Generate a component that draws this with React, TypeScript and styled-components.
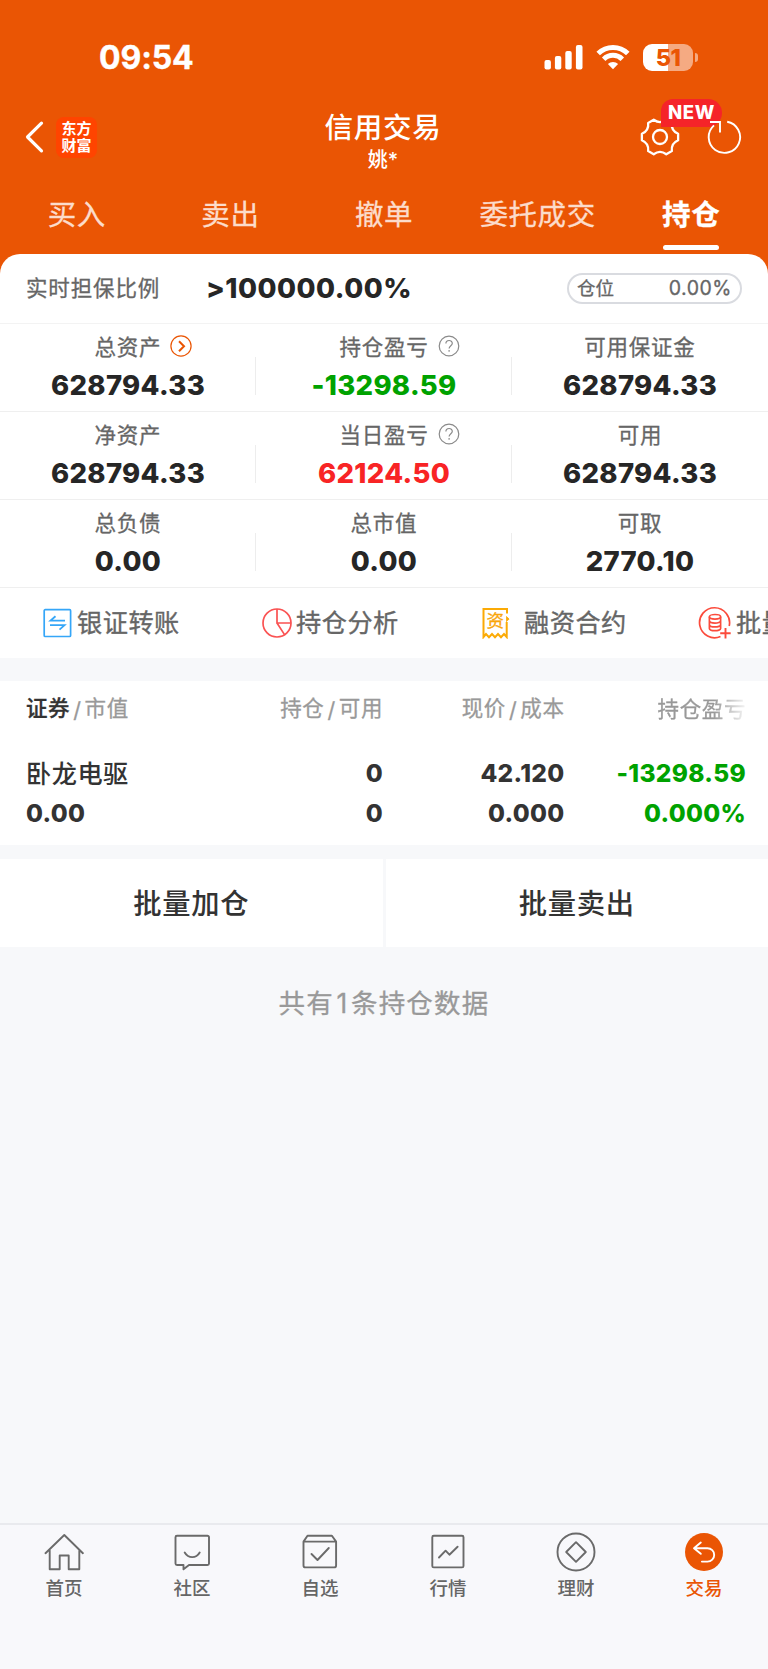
import React from 'react';
import styled, { createGlobalStyle } from 'styled-components';

const ORANGE = '#ea5504';
const GREEN = '#00a200';
const RED = '#f82425';
const INK = '#262626';
const PAGE = '#f7f8fa';

const GlobalStyle = createGlobalStyle`
  * { box-sizing: border-box; }
  body {
    margin: 0;
    background: #fff;
    font-family: Inter, "Noto Sans CJK SC", sans-serif;
    line-height: 1.3;
    color: ${INK};
  }
  svg { display: block; flex: none; }
`;

const Screen = styled.div`
  width: 768px;
  height: 1669px;
  display: flex;
  flex-direction: column;
  overflow: hidden;
  background: ${PAGE};
`;

const Header = styled.header`
  height: 274px;
  flex: none;
  background: ${ORANGE};
  color: #fff;
`;

const StatusBar = styled.div`
  height: 95px;
  padding: 19px 70px 0 99px;
  display: flex;
  align-items: center;
  justify-content: space-between;
`;

const Clock = styled.div`
  padding-top: 1px;
  font-size: 32px;
  line-height: 38px;
  font-weight: 700;
  letter-spacing: -0.1px;
  -webkit-text-stroke: 0.4px;
`;

const StatusIcons = styled.div`
  display: flex;
  align-items: center;
  gap: 13px;
`;

const BatteryWrap = styled.div`
  display: flex;
  align-items: center;
  gap: 2px;
`;

const BatteryBody = styled.div`
  width: 50px;
  height: 27px;
  border-radius: 9px;
  background: linear-gradient(90deg, #fff 50%, #f5aa82 50%);
  color: ${ORANGE};
  font-size: 23.5px;
  font-weight: 800;
  line-height: 27px;
  text-align: center;
  letter-spacing: -0.5px;
`;

const BatteryCap = styled.div`
  width: 3px;
  height: 9px;
  border-radius: 0 4px 4px 0;
  background: #f5aa82;
`;

const NavBar = styled.div`
  height: 84px;
  padding: 0 26px 0 24px;
  display: grid;
  grid-template-columns: 1fr auto 1fr;
  align-items: center;
`;

const NavLeft = styled.div`
  display: flex;
  align-items: center;
  gap: 11px;
`;

const Logo = styled.div`
  width: 41px;
  height: 41px;
  border-radius: 8px;
  background: #ff4400;
  display: flex;
  flex-direction: column;
  align-items: center;
  justify-content: center;
  font-size: 15px;
  line-height: 17.5px;
  font-weight: 700;
`;

const TitleBlock = styled.div`
  padding-top: 9px;
  display: flex;
  flex-direction: column;
  align-items: center;
`;

const Title = styled.div`
  font-size: 28.5px;
  line-height: 36px;
  font-weight: 500;
  letter-spacing: 0.8px;
`;

const Subtitle = styled.div`
  font-size: 20px;
  line-height: 28px;
  font-weight: 500;
`;

const NavRight = styled.div`
  display: flex;
  justify-content: flex-end;
  align-items: center;
  gap: 27px;
`;

const GearHolder = styled.div`
  position: relative;
`;

const NewBadge = styled.div`
  position: absolute;
  left: 21px;
  top: -18px;
  width: 61px;
  height: 28px;
  border-radius: 12px 14px 14px 0;
  background: #f52429;
  font-size: 18.5px;
  line-height: 27px;
  font-weight: 800;
  letter-spacing: 0.6px;
  text-align: center;
`;

const RefreshHolder = styled.div`
  position: relative;
`;

const Tabs = styled.nav`
  display: grid;
  grid-template-columns: repeat(5, 1fr);
`;

const Tab = styled.div<{ $active?: boolean }>`
  height: 75px;
  padding-top: 18px;
  display: flex;
  flex-direction: column;
  align-items: center;
  gap: 12px;
  font-size: 28.5px;
  line-height: 36px;
  letter-spacing: 0.6px;
  font-weight: ${p => (p.$active ? 700 : 400)};
  color: ${p => (p.$active ? '#fff' : '#fcdccb')};
  -webkit-text-stroke: 0.3px;
`;

const TabLine = styled.div`
  width: 56px;
  height: 5px;
  border-radius: 3px;
  background: #fff;
`;

const Panel = styled.section`
  flex: none;
  margin-top: -20px;
  border-radius: 20px 20px 0 0;
  background: #fff;
`;

const RatioRow = styled.div`
  height: 70px;
  padding: 1px 26px 0 26px;
  display: flex;
  align-items: center;
  border-bottom: 1px solid #f3f3f3;
`;

const RatioLabel = styled.div`
  width: 180px;
  font-size: 21.5px;
  letter-spacing: 0.85px;
  color: #666;
  -webkit-text-stroke: 0.3px;
`;

const RatioValue = styled.div`
  flex: 1;
  font-size: 27.5px;
  font-weight: 800;
  letter-spacing: 0.5px;
`;

const PositionPill = styled.div`
  width: 175px;
  height: 31px;
  margin-top: -1px;
  padding: 0 8px;
  border: 2px solid #d9dbe0;
  border-radius: 16px;
  display: flex;
  align-items: center;
  justify-content: space-between;
  font-size: 18.5px;
  line-height: 27px;
  color: #666;
  -webkit-text-stroke: 0.3px;
`;

const PillValue = styled.span`
  font-size: 19.5px;
  letter-spacing: 0.5px;
`;

const AssetGrid = styled.div`
  display: grid;
  grid-template-columns: repeat(3, 256px);
`;

const AssetCell = styled.div`
  height: 88px;
  padding-top: 8px;
  border-bottom: 1px solid #efefef;
  display: flex;
  flex-direction: column;
  align-items: center;
  background: linear-gradient(#ededed, #ededed) no-repeat right 0 top 33px / 1px 38px;
  &:nth-child(3n) { background: none; }
`;

const AssetLabel = styled.div`
  display: flex;
  align-items: center;
  height: 30px;
  font-size: 21.5px;
  line-height: 30px;
  letter-spacing: 0.75px;
  color: #666;
  -webkit-text-stroke: 0.3px;
`;

const LabelIcon = styled.span`
  margin: -2px -31px 0 9px;
`;

const AssetValue = styled.div<{ $color?: string }>`
  height: 46px;
  line-height: 46px;
  font-size: 27.5px;
  font-weight: 800;
  letter-spacing: 0.3px;
  color: ${p => p.$color ?? INK};
`;

const QuickRow = styled.div`
  height: 70px;
  padding-left: 41px;
  display: flex;
  overflow: hidden;
`;

const QuickItem = styled.div<{ $gap: number }>`
  flex: 0 0 219px;
  display: flex;
  align-items: center;
  gap: ${p => p.$gap}px;
  white-space: nowrap;
  font-size: 25.2px;
  letter-spacing: 0.5px;
  color: #666;
  -webkit-text-stroke: 0.35px;
  svg { -webkit-text-stroke: 0; }
`;

const Holdings = styled.section`
  flex: none;
  height: 164px;
  margin-top: 23px;
  padding: 0 21.5px 0 26px;
  background: #fff;
`;

const HoldingRow = styled.div`
  height: 40px;
  display: grid;
  grid-template-columns: 176px 181px 181.5px 181.5px;
  align-items: center;
  text-align: right;
  font-size: 24.5px;
  font-weight: 800;
  letter-spacing: 0.3px;
  color: #333;
`;

const HoldingHead = styled(HoldingRow)`
  height: 57px;
  margin-bottom: 16px;
`;

const HeadCell = styled.div<{ $left?: boolean; $fade?: boolean }>`
  display: flex;
  gap: 3px;
  justify-content: ${p => (p.$left ? 'flex-start' : 'flex-end')};
  font-size: 21.5px;
  letter-spacing: 0.6px;
  font-weight: 400;
  color: #999;
  -webkit-text-stroke: 0.3px;
  ${p => p.$fade && 'mask-image: linear-gradient(90deg, #000 82%, transparent 102%);'}
`;

const Slash = styled.span`
  padding-top: 2px;
`;

const Strong = styled.span`
  font-weight: 500;
  color: #333;
`;

const Stock = styled.div`
  text-align: left;
  font-size: 25.2px;
  font-weight: 500;
  letter-spacing: 0.5px;
`;

const Cell = styled.div<{ $left?: boolean; $color?: string }>`
  text-align: ${p => (p.$left ? 'left' : 'right')};
  color: ${p => p.$color ?? '#333'};
`;

const BatchActions = styled.div`
  flex: none;
  margin-top: 14px;
  display: grid;
  grid-template-columns: 1fr 1fr;
  gap: 3px;
`;

const BatchButton = styled.button`
  height: 88px;
  border: 0;
  padding: 2px 0 0;
  background: #fff;
  font: 500 28.3px/40px Inter, "Noto Sans CJK SC", sans-serif;
  letter-spacing: 0.7px;
  color: #333;
`;

const Summary = styled.div`
  flex: 1;
  padding-top: 36px;
  text-align: center;
  font-size: 26.5px;
  line-height: 40px;
  letter-spacing: 1.2px;
  color: #999;
  -webkit-text-stroke: 0.3px;
`;

const Count = styled.span`
  margin: 0 2.5px;
`;

const BottomBar = styled.nav`
  flex: none;
  height: 146px;
  border-top: 2px solid #e9eaee;
  background: #f8f8fb;
  display: grid;
  grid-template-columns: repeat(6, 1fr);
`;

const BottomItem = styled.div<{ $active?: boolean }>`
  padding-top: 7px;
  display: flex;
  flex-direction: column;
  align-items: center;
  font-size: 18.5px;
  line-height: 32px;
  font-weight: 500;
  color: ${p => (p.$active ? ORANGE : '#666')};
`;

const SignalIcon = () => (
  <svg width="39" height="26" viewBox="0 0 39 26" fill="#fff">
    <rect x="0.5" y="16" width="6.4" height="9.5" rx="2" />
    <rect x="10.9" y="12" width="6.4" height="13.5" rx="2" />
    <rect x="21.3" y="7" width="6.4" height="18.5" rx="2" />
    <rect x="31.9" y="1" width="6.6" height="24.5" rx="2" />
  </svg>
);

const WifiIcon = () => (
  <svg width="34" height="26" viewBox="0 0 34 26">
    <path d="M2.2 9.6a21 21 0 0 1 29.6 0M7.7 15.2a13.2 13.2 0 0 1 18.6 0" fill="none" stroke="#fff" strokeWidth="5" />
    <path d="M17 25.3l-5.1-5.2a7.4 7.4 0 0 1 10.2 0z" fill="#fff" />
  </svg>
);

const BackIcon = () => (
  <svg width="21" height="34" viewBox="0 0 21 34" fill="none" stroke="#fff" strokeWidth="3.2">
    <path d="M17.500 3.200L3.500 17l14 13.800" strokeLinejoin="round" strokeLinecap="round" />
  </svg>
);

const polar = (r: number, deg: number) => {
  const a = (deg * Math.PI) / 180;
  return `${(20 + r * Math.cos(a)).toFixed(2)} ${(20 + r * Math.sin(a)).toFixed(2)}`;
};

const gearPath =
  [0, 60, 120, 180, 240, 300]
    .map((d, i) => `${i ? 'L' : 'M'}${polar(18.4, d - 10)}L${polar(18.4, d + 10)}Q${polar(12.6, d + 30)} ${polar(18.4, d + 50)}`)
    .join('') + 'Z';

const GearIcon = () => (
  <svg width="40" height="40" viewBox="0 0 40 40" fill="none" stroke="#fff" strokeWidth="2.3" strokeLinejoin="round">
    <path d={gearPath} />
    <circle cx="20" cy="20" r="7" />
  </svg>
);

const RefreshIcon = () => (
  <svg width="35" height="36" viewBox="0 0 35 36" fill="none" stroke="#fff" strokeWidth="1.9">
    <path d="M20.2 2.700A15.700 15.700 0 1 1 7 6.400M3 3h10v10.500" />
  </svg>
);

const GoIcon = () => (
  <svg width="22" height="22" viewBox="0 0 22 22" fill="none" stroke={ORANGE}>
    <circle cx="11" cy="11" r="10.1" strokeWidth="1.2" />
    <path d="M9 6.2l5 5-5 5" strokeWidth="2" />
  </svg>
);

const HelpIcon = () => (
  <svg width="22" height="22" viewBox="0 0 22 22" fill="none" stroke="#8a8a8a" strokeWidth="1.2">
    <circle cx="11" cy="11" r="9.800" />
    <path d="M7.900 8.600c0-4.200 6.400-4 6.400-.3 0 2.300-3.200 2.500-3.200 5.200M11.100 15v1.700" strokeWidth="1.200" />
  </svg>
);

const TransferIcon = () => (
  <svg width="32" height="32" viewBox="0 0 32 32" fill="none" stroke="#35a6f8" strokeWidth="1.700">
    <rect x="3.200" y="2.700" width="26.400" height="26.800" rx="1" />
    <path d="M24 13.600H9.500l5-4.400M9 18.200h14.500l-5 4.400" strokeWidth="1.800" />
  </svg>
);

const PieIcon = () => (
  <svg width="32" height="32" viewBox="0 0 32 32" fill="none" stroke="#fa5252" strokeWidth="1.700">
    <circle cx="17" cy="16" r="14" />
    <path d="M17 2v14h14M17 16l7.500 11.600" />
  </svg>
);

const ContractBox = styled.span`
  position: relative;
  width: 32px;
  height: 32px;
`;

const ContractGlyph = styled.span`
  position: absolute;
  left: 7.5px;
  top: 3px;
  font-size: 17.5px;
  line-height: 22px;
  letter-spacing: 0;
  color: #f9a60c;
`;

const ContractIcon = () => (
  <ContractBox>
    <svg width="32" height="32" viewBox="0 0 32 32" fill="none" stroke="#fbaa05" strokeWidth="2">
      <path d="M28 6.500V2H4.500v28l2.500-3 3 3.200 3-3.200 3 3.200 3-3.200 3 3.200 3-3.200 2.700 3V15" />
      <path d="M27.500 9.500l2.600 2.500-2.600 2.600z" fill="#fbaa05" strokeWidth="0.800" />
    </svg>
    <ContractGlyph>资</ContractGlyph>
  </ContractBox>
);

const CoinsIcon = () => (
  <svg width="34" height="34" viewBox="0 0 34 34" fill="none" stroke="#fb4b3c" strokeWidth="1.700">
    <path d="M22.500 30.500A15 15 0 1 1 31.200 20" />
    <ellipse cx="17" cy="10.800" rx="5.600" ry="2.300" />
    <path d="M11.400 10.800v11.600c0 3 11.200 3 11.200 0V10.800M11.400 14.800c0 3 11.200 3 11.200 0M11.400 18.700c0 3 11.200 3 11.200 0" />
    <path d="M27.500 22v10.500M22.200 27.300h10.500" strokeWidth="1.900" />
  </svg>
);

const BarSvg = ({ children }: { children: React.ReactNode }) => (
  <svg width="40" height="40" viewBox="0 0 40 40" fill="none" stroke="#6a6a6a" strokeWidth="1.900" strokeLinejoin="round" strokeLinecap="round">
    {children}
  </svg>
);

const HomeIcon = () => (
  <BarSvg><path d="M1.500 21.200L20.300 3l18.600 18.200M5.700 18.500v18.700h10V23.500h9v13.700h10.600V18.500" /></BarSvg>
);
const ChatIcon = () => (
  <BarSvg>
    <path d="M5 3.800h30.500a1.500 1.500 0 0 1 1.500 1.500v26.200a1.500 1.500 0 0 1-1.500 1.500H17l-5.500 4.300V33H5a1.500 1.500 0 0 1-1.500-1.500V5.300A1.500 1.500 0 0 1 5 3.800z" />
    <path d="M12.700 20.500c3.600 6.200 11.500 6.200 15 0" />
  </BarSvg>
);
const BoxIcon = () => (
  <BarSvg>
    <path d="M3.500 9.600v23.800a2 2 0 0 0 2 2h28.600a2 2 0 0 0 2-2V9.600zM3.500 9.600L7.500 3.700h24.400l4.200 5.900" />
    <path d="M11.500 22l6 6 11.300-12" />
  </BarSvg>
);
const ChartIcon = () => (
  <BarSvg>
    <rect x="4.300" y="3.700" width="31.200" height="31.700" rx="1.500" />
    <path d="M11 25.500l6.600-6.800 3.800 4 8.200-8" />
  </BarSvg>
);
const WealthIcon = () => (
  <BarSvg>
    <circle cx="20" cy="20" r="18.500" />
    <path d="M20 10.200l9.800 9.800-9.800 9.800-9.800-9.800z" />
  </BarSvg>
);
const TradeIcon = () => (
  <BarSvg>
    <circle cx="20" cy="20" r="19" fill={ORANGE} stroke="none" />
    <path d="M16.800 10.500L10 16.200l6.800 5.600M10.500 16.200h13a6.700 6.700 0 0 1 0 13.400h-5.600" stroke="#fff" />
  </BarSvg>
);

type Asset = { label: string; value: string; color?: string; icon?: React.ReactNode };

const assets: Asset[] = [
  { label: '总资产', value: '628794.33', icon: <GoIcon /> },
  { label: '持仓盈亏', value: '-13298.59', color: GREEN, icon: <HelpIcon /> },
  { label: '可用保证金', value: '628794.33' },
  { label: '净资产', value: '628794.33' },
  { label: '当日盈亏', value: '62124.50', color: RED, icon: <HelpIcon /> },
  { label: '可用', value: '628794.33' },
  { label: '总负债', value: '0.00' },
  { label: '总市值', value: '0.00' },
  { label: '可取', value: '2770.10' },
];

const bottomItems = [
  { label: '首页', icon: <HomeIcon /> },
  { label: '社区', icon: <ChatIcon /> },
  { label: '自选', icon: <BoxIcon /> },
  { label: '行情', icon: <ChartIcon /> },
  { label: '理财', icon: <WealthIcon /> },
  { label: '交易', icon: <TradeIcon />, active: true },
];

export default function App() {
  return (
    <Screen>
      <GlobalStyle />
      <Header>
        <StatusBar>
          <Clock>09:54</Clock>
          <StatusIcons>
            <SignalIcon />
            <WifiIcon />
            <BatteryWrap>
              <BatteryBody>51</BatteryBody>
              <BatteryCap />
            </BatteryWrap>
          </StatusIcons>
        </StatusBar>
        <NavBar>
          <NavLeft>
            <BackIcon />
            <Logo>
              <span>东方</span>
              <span>财富</span>
            </Logo>
          </NavLeft>
          <TitleBlock>
            <Title>信用交易</Title>
            <Subtitle>姚*</Subtitle>
          </TitleBlock>
          <NavRight>
            <GearHolder>
              <GearIcon />
              <NewBadge>NEW</NewBadge>
            </GearHolder>
            <RefreshHolder>
              <RefreshIcon />
            </RefreshHolder>
          </NavRight>
        </NavBar>
        <Tabs>
          {['买入', '卖出', '撤单', '委托成交'].map(t => (
            <Tab key={t}>{t}</Tab>
          ))}
          <Tab $active>
            持仓
            <TabLine />
          </Tab>
        </Tabs>
      </Header>

      <Panel>
        <RatioRow>
          <RatioLabel>实时担保比例</RatioLabel>
          <RatioValue>&gt;100000.00%</RatioValue>
          <PositionPill>
            仓位<PillValue>0.00%</PillValue>
          </PositionPill>
        </RatioRow>
        <AssetGrid>
          {assets.map(a => (
            <AssetCell key={a.label}>
              <AssetLabel>
                {a.label}
                {a.icon && <LabelIcon>{a.icon}</LabelIcon>}
              </AssetLabel>
              <AssetValue $color={a.color}>{a.value}</AssetValue>
            </AssetCell>
          ))}
        </AssetGrid>
        <QuickRow>
          <QuickItem $gap={4}><TransferIcon />银证转账</QuickItem>
          <QuickItem $gap={4}><PieIcon />持仓分析</QuickItem>
          <QuickItem $gap={13}><ContractIcon />融资合约</QuickItem>
          <QuickItem $gap={4}><CoinsIcon />批量加仓</QuickItem>
        </QuickRow>
      </Panel>

      <Holdings>
        <HoldingHead>
          <HeadCell $left><Strong>证券</Strong><Slash>/</Slash><span>市值</span></HeadCell>
          <HeadCell><span>持仓</span><Slash>/</Slash><span>可用</span></HeadCell>
          <HeadCell><span>现价</span><Slash>/</Slash><span>成本</span></HeadCell>
          <HeadCell $fade>持仓盈亏</HeadCell>
        </HoldingHead>
        <HoldingRow>
          <Stock>卧龙电驱</Stock>
          <Cell>0</Cell>
          <Cell>42.120</Cell>
          <Cell $color={GREEN}>-13298.59</Cell>
        </HoldingRow>
        <HoldingRow>
          <Cell $left>0.00</Cell>
          <Cell>0</Cell>
          <Cell>0.000</Cell>
          <Cell $color={GREEN}>0.000%</Cell>
        </HoldingRow>
      </Holdings>

      <BatchActions>
        <BatchButton>批量加仓</BatchButton>
        <BatchButton>批量卖出</BatchButton>
      </BatchActions>

      <Summary>共有<Count>1</Count>条持仓数据</Summary>

      <BottomBar>
        {bottomItems.map(b => (
          <BottomItem key={b.label} $active={b.active}>
            {b.icon}
            {b.label}
          </BottomItem>
        ))}
      </BottomBar>
    </Screen>
  );
}
